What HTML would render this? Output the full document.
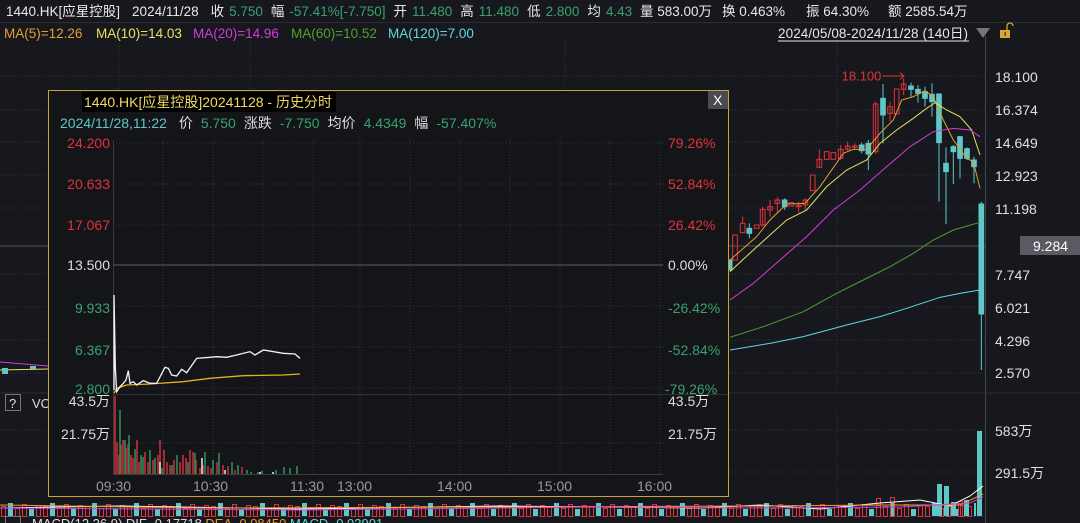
<!DOCTYPE html>
<html><head><meta charset="utf-8"><style>
html,body{margin:0;padding:0;background:#17181d;width:1080px;height:523px;overflow:hidden}
body{font-family:"Liberation Sans","Noto Sans CJK SC",sans-serif;position:relative}
svg{position:absolute;left:0;top:0}
</style></head><body>
<svg width="1080" height="523" viewBox="0 0 1080 523" font-family="Liberation Sans, Noto Sans CJK SC, sans-serif">
<defs>
<pattern id="vp" x="0" y="0" width="42" height="523" patternUnits="userSpaceOnUse">
<rect x="1.5" y="506.5" width="4" height="10" fill="none" stroke="#e0333a"/>
<rect x="8" y="503" width="5" height="13" fill="#5fc7c8"/>
<rect x="15.5" y="508.5" width="4" height="8" fill="none" stroke="#e0333a"/>
<rect x="22.5" y="504.5" width="4" height="12" fill="none" stroke="#e0333a"/>
<rect x="29" y="509" width="5" height="7" fill="#5fc7c8"/>
<rect x="36.5" y="505.5" width="4" height="11" fill="none" stroke="#e0333a"/>
</pattern>
</defs>
<rect width="1080" height="523" fill="#17181d"/>
<line x1="0" y1="22.5" x2="1080" y2="22.5" stroke="#2c2d33"/>
<g stroke="#33343a" stroke-dasharray="1,2">
<line x1="0" y1="76" x2="985" y2="76"/><line x1="0" y1="110" x2="985" y2="110"/><line x1="0" y1="142" x2="985" y2="142"/><line x1="0" y1="175" x2="985" y2="175"/><line x1="0" y1="208" x2="985" y2="208"/><line x1="0" y1="274" x2="985" y2="274"/><line x1="0" y1="307" x2="985" y2="307"/><line x1="0" y1="340" x2="985" y2="340"/><line x1="0" y1="373" x2="985" y2="373"/>
<line x1="119" y1="40" x2="119" y2="390"/><line x1="250" y1="40" x2="250" y2="390"/><line x1="565" y1="40" x2="565" y2="390"/><line x1="837" y1="40" x2="837" y2="390"/>
<line x1="0" y1="430" x2="985" y2="430"/><line x1="0" y1="472" x2="985" y2="472"/>
<line x1="837" y1="410" x2="837" y2="516"/>
</g>
<line x1="0" y1="246" x2="985" y2="246" stroke="#55565c"/>
<line x1="985.5" y1="36" x2="985.5" y2="523" stroke="#44454b"/>
<line x1="0" y1="393" x2="1080" y2="393" stroke="#2c2d33"/>
<line x1="0" y1="516.5" x2="985" y2="516.5" stroke="#2c2d33"/>
<g transform="translate(720 60) scale(0.33333)" stroke-width="3" fill="none">
<g stroke="#e0333a">
<rect x="38" y="525" width="14" height="75"/><line x1="68" y1="470" x2="68" y2="520"/><rect x="61" y="490" width="14" height="28" fill="#17181d"/>
<rect x="103" y="495" width="14" height="10"/><line x1="128" y1="440" x2="128" y2="500"/><rect x="121" y="448" width="14" height="47"/>
<line x1="150" y1="420" x2="150" y2="470"/><rect x="143" y="440" width="14" height="10"/><line x1="172" y1="412" x2="172" y2="460"/><rect x="165" y="420" width="14" height="10"/>
<rect x="207" y="428" width="14" height="10"/><line x1="236" y1="425" x2="236" y2="458"/><rect x="229" y="436" width="14" height="4"/><line x1="256" y1="415" x2="256" y2="450"/><rect x="249" y="420" width="14" height="15"/>
<rect x="271" y="345" width="14" height="47"/><line x1="298" y1="268" x2="298" y2="322"/><rect x="291" y="298" width="14" height="24"/><rect x="313" y="275" width="14" height="23"/><rect x="333" y="278" width="14" height="20"/>
<line x1="362" y1="255" x2="362" y2="300"/><rect x="355" y="268" width="14" height="27"/><line x1="383" y1="245" x2="383" y2="272"/><rect x="376" y="258" width="14" height="10"/><line x1="404" y1="250" x2="404" y2="268"/><rect x="397" y="258" width="14" height="4"/>
<line x1="467" y1="125" x2="467" y2="282"/><rect x="460" y="132" width="14" height="143"/><line x1="510" y1="125" x2="510" y2="185"/><rect x="503" y="140" width="14" height="20"/><rect x="523" y="87" width="14" height="75"/>
<line x1="551" y1="55" x2="551" y2="105"/><rect x="544" y="72" width="14" height="16"/>
<text x="365" y="62" fill="#e0333a" stroke="none" font-size="39">18.100</text><path d="M488 48 H552 M540 38 L552 48 L540 58"/>
</g>
<g stroke="#5fc7c8" fill="#5fc7c8">
<rect x="24" y="600" width="12" height="30"/><line x1="88" y1="490" x2="88" y2="535"/><rect x="81" y="505" width="14" height="15"/>
<line x1="194" y1="415" x2="194" y2="450"/><rect x="187" y="420" width="14" height="20"/>
<line x1="425" y1="248" x2="425" y2="280"/><rect x="418" y="255" width="14" height="17"/><line x1="445" y1="240" x2="445" y2="330"/><rect x="438" y="250" width="14" height="32"/>
<line x1="489" y1="72" x2="489" y2="250"/><rect x="482" y="115" width="14" height="50"/>
<line x1="573" y1="68" x2="573" y2="110"/><rect x="566" y="78" width="14" height="10"/><line x1="594" y1="75" x2="594" y2="128"/><rect x="587" y="88" width="14" height="12"/>
<line x1="615" y1="80" x2="615" y2="140"/><rect x="608" y="95" width="14" height="20"/><line x1="636" y1="70" x2="636" y2="170"/><rect x="629" y="103" width="14" height="22"/>
<line x1="657" y1="100" x2="657" y2="425"/><rect x="650" y="102" width="14" height="146"/><line x1="678" y1="262" x2="678" y2="492"/><rect x="671" y="310" width="14" height="25"/>
<line x1="700" y1="255" x2="700" y2="372"/><rect x="693" y="260" width="14" height="15"/><line x1="720" y1="228" x2="720" y2="355"/><rect x="713" y="230" width="14" height="65"/>
<line x1="741" y1="262" x2="741" y2="300"/><rect x="734" y="266" width="14" height="29"/><line x1="762" y1="290" x2="762" y2="370"/><rect x="755" y="300" width="14" height="20"/>
<line x1="784" y1="425" x2="784" y2="930"/><rect x="777" y="432" width="14" height="330"/>
</g>
<polyline stroke="#e0a030" points="30,600 110,530 150,480 200,432 255,430 300,380 370,280 400,268 440,268 480,220 520,180 545,120 580,110 615,92 640,110 670,180 700,240 740,295 760,305 780,385"/>
<polyline stroke="#e8e060" points="30,635 100,570 150,525 200,480 260,450 320,380 380,330 440,300 480,250 530,210 580,175 620,145 645,128 680,150 720,170 755,210 780,285"/>
<polyline stroke="#d63ad6" points="30,720 100,670 180,600 260,530 340,450 420,390 500,320 570,260 640,215 700,205 750,210 780,230"/>
<polyline stroke="#4fa02c" points="30,832 130,800 250,755 350,700 430,660 510,620 580,580 640,540 700,510 780,487"/>
<polyline stroke="#5fd8e0" points="30,870 150,850 250,830 380,795 480,770 560,745 660,712 720,700 780,690"/>
</g>
<polyline fill="none" stroke="#d63ad6" points="0,362 48,366"/><polyline fill="none" stroke="#e8e060" points="0,370 48,369"/>
<rect x="2" y="368" width="6" height="6" fill="#5fc7c8"/><rect x="30" y="366" width="6" height="3" fill="#5fc7c8"/>
<g fill="#e0e0e0" font-size="14">
<text x="995" y="82">18.100</text><text x="995" y="115">16.374</text><text x="995" y="148">14.649</text><text x="995" y="181">12.923</text><text x="995" y="214">11.198</text><text x="995" y="280">7.747</text><text x="995" y="313">6.021</text><text x="995" y="346">4.296</text><text x="995" y="378">2.570</text>
<text x="995" y="436">583万</text><text x="995" y="478">291.5万</text>
</g>
<rect x="1020" y="236" width="60" height="19" fill="#5a5b62"/><text x="1033" y="251" fill="#fff" font-size="14">9.284</text>
<rect x="0" y="498" width="976" height="19" fill="url(#vp)"/>
<g fill="none" stroke="#e0333a">
<rect x="876.5" y="498.5" width="4" height="18"/><rect x="890.5" y="497.5" width="4" height="19"/><rect x="958.5" y="501.5" width="4" height="15"/>
</g>
<g fill="#5fc7c8">
<rect x="937" y="484" width="5" height="32"/><rect x="944" y="486" width="5" height="30"/><rect x="951" y="502" width="5" height="14"/><rect x="964" y="500" width="5" height="16"/><rect x="977" y="431" width="5" height="85"/>
</g>
<polyline fill="none" stroke="#fff" points="0,508 120,506 300,509 500,506 700,508 760,505 820,509 880,503 920,500 950,506 970,496 983,486"/>
<polyline fill="none" stroke="#e0a030" points="0,505 200,508 500,507 760,506 880,505 960,505 983,494"/>
<polyline fill="none" stroke="#d63ad6" points="0,508 300,510 600,507 760,508 900,507 970,503 983,497"/>
<rect x="5.5" y="394.5" width="15" height="16" fill="none" stroke="#777"/><text x="9" y="408" fill="#ddd" font-size="13">?</text>
<text x="32" y="408" fill="#ddd" font-size="13">VO</text>
<rect x="5.5" y="516.5" width="15" height="10" fill="none" stroke="#777"/>
<text x="32" y="528" fill="#ddd" font-size="13">MACD(12,26,9)  DIF -0.17718  <tspan fill="#e0a030">DEA -0.08450</tspan>  <tspan fill="#5fd8e0">MACD -0.03901</tspan></text>

<rect x="48.5" y="90.5" width="680" height="406" fill="#141519" stroke="#c9a23a"/>
<rect x="708" y="91" width="20" height="18" fill="#4a4b50"/><text x="713" y="105" fill="#fff" font-size="14">X</text>
<rect x="82" y="92" width="254" height="20" fill="#000"/>
<g stroke="#33343a" stroke-dasharray="1,2">
<line x1="113" y1="143" x2="663" y2="143"/><line x1="113" y1="184" x2="663" y2="184"/><line x1="113" y1="225" x2="663" y2="225"/><line x1="113" y1="306" x2="663" y2="306"/><line x1="113" y1="347" x2="663" y2="347"/><line x1="113" y1="388" x2="663" y2="388"/>
<line x1="113" y1="443" x2="663" y2="443"/>
<line x1="163" y1="140" x2="163" y2="474"/><line x1="213" y1="140" x2="213" y2="474"/><line x1="263" y1="140" x2="263" y2="474"/><line x1="313" y1="140" x2="313" y2="474"/><line x1="360" y1="140" x2="360" y2="474"/><line x1="410" y1="140" x2="410" y2="474"/><line x1="460" y1="140" x2="460" y2="474"/><line x1="510" y1="140" x2="510" y2="474"/><line x1="560" y1="140" x2="560" y2="474"/><line x1="610" y1="140" x2="610" y2="474"/><line x1="660" y1="140" x2="660" y2="474"/>
</g>
<line x1="113.5" y1="140" x2="113.5" y2="475" stroke="#3a3b40"/>
<line x1="113" y1="265" x2="663" y2="265" stroke="#45464b" stroke-width="1.5"/>
<line x1="113" y1="394.5" x2="728" y2="394.5" stroke="#303136"/>
<line x1="113" y1="474.5" x2="663" y2="474.5" stroke="#3a3b40"/>
<g transform="translate(50 130) scale(0.33333)" fill="none" stroke-width="4">
<polyline stroke="#e8b020" points="192,790 200,775 230,765 300,762 400,755 480,745 580,737 700,735 750,732"/>
<polyline stroke="#f2f2f2" points="192,780 192,495 196,715 200,785 210,770 220,760 228,750 235,722 240,760 250,755 260,765 280,752 300,760 320,760 345,712 355,715 365,735 380,738 395,718 410,728 440,685 480,682 500,680 530,682 560,675 600,665 615,675 640,660 700,670 735,672 750,685"/>
</g>
<g stroke-width="1.6">
<path stroke="#c0303a" d="M115 474V396 M117 474V442 M119 474V455 M121 474V445 M123 474V440 M126 474V448 M128 474V444 M131 474V455 M133 474V458 M137 474V440 M139 474V462 M145 474V452 M148 474V462 M153 474V460 M158 474V455 M160 474V440 M164 474V450 M167 474V462 M170 474V465 M174 474V460 M180 474V462 M183 474V455 M186 474V458 M190 474V450 M193 474V452 M196 474V460 M200 474V468 M203 474V465 M208 474V466 M211 474V468 M217 474V462 M223 474V465 M228 474V466 M235 474V470 M242 474V467"/>
<path stroke="#2f8a5a" d="M120 474V410 M125 474V440 M129 474V435 M135 474V449 M141 474V455 M143 474V457 M150 474V450 M155 474V458 M162 474V468 M172 474V465 M177 474V455 M188 474V462 M195 474V453 M205 474V452 M213 474V460 M219 474V453 M232 474V462 M238 474V465 M247 474V470 M251 474V472 M258 474V472 M262 474V471 M276 474V470 M284 474V467 M290 474V468 M297 474V466"/>
<path stroke="#ddd" d="M160 474V462 M202 474V458 M225 474V470 M260 474V472 M273 474V472"/>
</g>
<g font-size="14">
<text x="84" y="107" fill="#f0dc60">1440.HK[应星控股]20241128 - 历史分时</text>
<text x="60" y="128" fill="#5fc7c8">2024/11/28,11:22 <tspan fill="#ddd" dx="8">价</tspan><tspan fill="#3aa070" dx="8">5.750</tspan><tspan fill="#ddd" dx="8">涨跌</tspan><tspan fill="#3aa070" dx="8">-7.750</tspan><tspan fill="#ddd" dx="8">均价</tspan><tspan fill="#3aa070" dx="8">4.4349</tspan><tspan fill="#ddd" dx="8">幅</tspan><tspan fill="#3aa070" dx="8">-57.407%</tspan></text>
<g text-anchor="end"><text x="110" y="148" fill="#e0333a">24.200</text><text x="110" y="189" fill="#e0333a">20.633</text><text x="110" y="230" fill="#e0333a">17.067</text><text x="110" y="270" fill="#ddd">13.500</text><text x="110" y="313" fill="#3aa070">9.933</text><text x="110" y="355" fill="#3aa070">6.367</text><text x="110" y="394" fill="#3aa070">2.800</text><text x="110" y="406" fill="#ddd">43.5万</text><text x="110" y="439" fill="#ddd">21.75万</text></g>
<text x="668" y="148" fill="#e0333a">79.26%</text><text x="668" y="189" fill="#e0333a">52.84%</text><text x="668" y="230" fill="#e0333a">26.42%</text><text x="668" y="270" fill="#ddd">0.00%</text><text x="668" y="313" fill="#3aa070">-26.42%</text><text x="668" y="355" fill="#3aa070">-52.84%</text><text x="665" y="394" fill="#3aa070">-79.26%</text><text x="668" y="406" fill="#ddd">43.5万</text><text x="668" y="439" fill="#ddd">21.75万</text>
<g fill="#999"><text x="96" y="491">09:30</text><text x="193" y="491">10:30</text><text x="290" y="491">11:30</text><text x="337" y="491">13:00</text><text x="437" y="491">14:00</text><text x="537" y="491">15:00</text><text x="637" y="491">16:00</text></g>
</g>
<g font-size="13.5" fill="#e8e8e8">
<text x="6" y="16">1440.HK[应星控股]<tspan dx="12">2024/11/28</tspan><tspan dx="12">收</tspan><tspan fill="#3aa070" dx="5">5.750</tspan><tspan dx="8">幅</tspan><tspan fill="#3aa070" dx="5">-57.41%[-7.750]</tspan><tspan dx="8">开</tspan><tspan fill="#3aa070" dx="5">11.480</tspan><tspan dx="8">高</tspan><tspan fill="#3aa070" dx="5">11.480</tspan><tspan dx="8">低</tspan><tspan fill="#3aa070" dx="5">2.800</tspan><tspan dx="8">均</tspan><tspan fill="#3aa070" dx="5">4.43</tspan></text>
<text x="640" y="16">量 583.00万</text>
<text x="722" y="16">换 0.463%</text>
<text x="806" y="16">振 64.30%</text>
<text x="888" y="16">额 2585.54万</text>
<text x="4" y="38" fill="#e0a030">MA(5)=12.26</text><text x="96" y="38" fill="#e8e060">MA(10)=14.03</text><text x="193" y="38" fill="#d63ad6">MA(20)=14.96</text><text x="291" y="38" fill="#4fa02c">MA(60)=10.52</text><text x="388" y="38" fill="#5fd8e0">MA(120)=7.00</text>
<text x="778" y="38" textLength="190">2024/05/08-2024/11/28 (140日)</text>
</g>
<line x1="778" y1="41" x2="969" y2="41" stroke="#e8e8e8"/>
<path d="M976 28 H990 L983 38 Z" fill="#777"/>
<rect x="1000" y="30" width="10" height="8" fill="#d8a830"/><path d="M1007 30 V26 A3 3 0 0 1 1013 26" fill="none" stroke="#d8a830" stroke-width="1.3"/><rect x="1004.5" y="32" width="1.3" height="4" fill="#333"/>
</svg>
</body></html>
